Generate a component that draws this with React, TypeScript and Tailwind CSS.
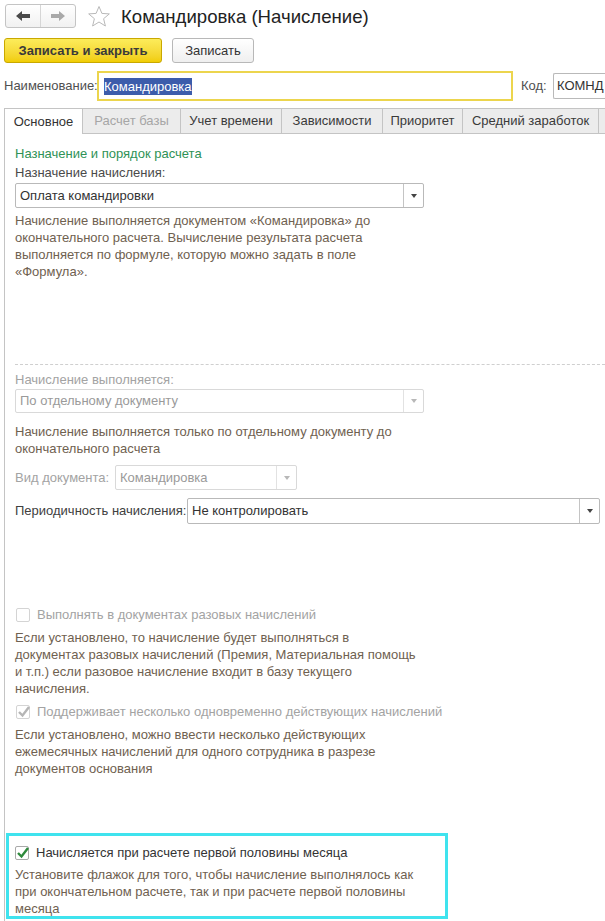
import type { ReactNode } from "react";

const tabs = [
  { label: "Основное", w: "w-[79px]", active: true },
  { label: "Расчет базы", w: "w-[98px]", disabled: true },
  { label: "Учет времени", w: "w-[101px]" },
  { label: "Зависимости", w: "w-[101px]" },
  { label: "Приоритет", w: "w-[80px]" },
  { label: "Средний заработок", w: "w-[136px]" },
];

function Arrow({ dir, color }: { dir: "left" | "right"; color: string }) {
  return (
    <svg width="16" height="12" viewBox="0 0 16 12" className={dir === "right" ? "rotate-180" : ""}>
      <path d="M1 6 L7 1 L7 4 L15 4 L15 8 L7 8 L7 11 Z" fill={color} />
    </svg>
  );
}

function Select({
  value,
  width,
  disabled,
  h = "h-[25px]",
}: {
  value: string;
  width: string;
  disabled?: boolean;
  h?: string;
}) {
  return (
    <div
      className={`flex ${width} ${h} items-stretch rounded-[2px] border bg-white ${
        disabled ? "border-[#d9d9d9] text-[#9a9a9a]" : "border-[#b9b9b9] text-[#333]"
      }`}
    >
      <div className="flex flex-1 items-center pl-[4px] text-[13px]">{value}</div>
      <div
        className={`flex w-[20px] items-center justify-center border-l ${
          disabled ? "border-[#e2e2e2]" : "border-[#c4c4c4]"
        }`}
      >
        <svg width="6" height="4" viewBox="0 0 6 4">
          <path d="M0 0 L6 0 L3 4 Z" fill={disabled ? "#b8b8b8" : "#444"} />
        </svg>
      </div>
    </div>
  );
}

function Checkbox({ checked, disabled }: { checked?: boolean; disabled?: boolean }) {
  return (
    <div
      className={`relative h-[14px] w-[14px] rounded-[2px] border bg-white ${
        disabled ? "border-[#d4d4d4]" : "border-[#a9a9a9]"
      }`}
    >
      {checked && (
        <svg width="14" height="13" viewBox="0 0 14 13" className="absolute left-[0px] top-[-1px]">
          <path
            d="M2 7 L5.5 10.5 L12 2"
            fill="none"
            stroke={disabled ? "#b5b5b5" : "#2f8a3c"}
            strokeWidth="2.4"
          />
        </svg>
      )}
    </div>
  );
}

function Desc({ children, className = "" }: { children: ReactNode; className?: string }) {
  return <div className={`text-[13px] leading-[17px] text-[#6f6150] ${className}`}>{children}</div>;
}

export default function App() {
  return (
    <div className="relative h-[921px] w-[605px] overflow-hidden bg-white font-['Liberation_Sans',Arial,sans-serif] text-[13px] text-[#404040]">
      {/* header */}
      <div className="mt-[4px] flex h-[24px] items-center pl-[5px]">
        <div className="flex h-[24px] w-[71px] rounded-[3px] border border-[#c4c4c4] bg-gradient-to-b from-white to-[#f1f1f1]">
          <div className="flex w-[35px] items-center justify-center border-r border-[#d6d6d6]">
            <Arrow dir="left" color="#4a4a4a" />
          </div>
          <div className="flex flex-1 items-center justify-center">
            <Arrow dir="right" color="#a9a9a9" />
          </div>
        </div>
        <svg width="24" height="23" viewBox="0 0 24 23" className="ml-[11px]">
          <path
            d="M12 1.5 L14.9 8.4 L22.3 8.9 L16.6 13.7 L18.4 21 L12 17 L5.6 21 L7.4 13.7 L1.7 8.9 L9.1 8.4 Z"
            fill="none"
            stroke="#b9b9b9"
            strokeWidth="1"
          />
        </svg>
        <div className="ml-[10px] mt-[2px] text-[18.6px] text-[#222]">Командировка (Начисление)</div>
      </div>

      {/* buttons */}
      <div className="mt-[10px] flex gap-[10px] pl-[4px]">
        <div className="flex h-[25px] w-[158px] items-center justify-center rounded-[3px] border border-[#c9a800] bg-gradient-to-b from-[#fcec5a] to-[#f1cd00] text-[13px] font-bold text-[#3a3a3a]">
          Записать и закрыть
        </div>
        <div className="flex h-[25px] w-[82px] items-center justify-center rounded-[3px] border border-[#b8b8b8] bg-gradient-to-b from-white to-[#efefef] text-[13px] text-[#333]">
          Записать
        </div>
      </div>

      {/* name row */}
      <div className="mt-[8px] flex h-[30px] items-center pl-[4px]">
        <span className="w-[93px] text-[#505050]">Наименование:</span>
        <div className="flex h-[30px] w-[416px] items-center border-2 border-[#ecd54d] pl-[5px]">
          <span className="bg-[#3c5cab] leading-[17px] text-white">Командировка</span>
        </div>
        <span className="ml-[8px] w-[32px] text-[#505050]">Код:</span>
        <div className="flex h-[26px] flex-1 items-center rounded-l-[2px] border border-r-0 border-[#b9b9b9] pl-[3px] text-[#333]">
          КОМНД
        </div>
      </div>

      {/* tabs */}
      <div className="mt-[7px] flex h-[26px] pl-[4px]">
        {tabs.map((t) =>
          t.active ? (
            <div
              key={t.label}
              className={`${t.w} flex items-center justify-center border border-b-0 border-[#c4c4c4] bg-white text-[#333]`}
            >
              {t.label}
            </div>
          ) : (
            <div
              key={t.label}
              className={`${t.w} flex items-center justify-center border border-l-0 border-[#c4c4c4] bg-[#ececec] ${
                t.disabled ? "text-[#a6a6a6]" : "text-[#3a3a3a]"
              }`}
            >
              {t.label}
            </div>
          )
        )}
        <div className="flex-1 border border-l-0 border-r-0 border-[#c4c4c4] bg-[#ececec]" />
      </div>

      {/* content */}
      <div className="ml-[4px] h-[800px] border-l border-[#c4c4c4] pl-[10px] pt-[11px]">
        <div className="leading-[17px] text-[#2f9256]">Назначение и порядок расчета</div>
        <div className="mt-[2px] leading-[17px] text-[#4a4a4a]">Назначение начисления:</div>
        <div className="mt-[2px]">
          <Select value="Оплата командировки" width="w-[409px]" />
        </div>
        <Desc className="mt-[4px]">
          Начисление выполняется документом «Командировка» до
          <br />
          окончательного расчета. Вычисление результата расчета
          <br />
          выполняется по формуле, которую можно задать в поле
          <br />
          «Формула».
        </Desc>

        <div className="mt-[84px] border-t border-dashed border-[#cfcfcf]" />

        <div className="mt-[6px] leading-[17px] text-[#a3a3a3]">Начисление выполняется:</div>
        <div className="mt-[1px]">
          <Select value="По отдельному документу" width="w-[409px]" h="h-[24px]" disabled />
        </div>
        <Desc className="mt-[10px] leading-[16px]">
          Начисление выполняется только по отдельному документу до
          <br />
          окончательного расчета
        </Desc>

        <div className="mt-[8px] flex items-center">
          <span className="w-[100px] text-[#a3a3a3]">Вид документа:</span>
          <Select value="Командировка" width="w-[182px]" disabled />
        </div>

        <div className="mt-[8px] flex items-center">
          <span className="w-[172px] text-[#404040]">Периодичность начисления:</span>
          <Select value="Не контролировать" width="w-[413px]" h="h-[26px]" />
        </div>

        <div className="mt-[83px] flex items-center gap-[7px] pl-[1px] leading-[16px]">
          <Checkbox disabled />
          <span className="text-[#a3a3a3]">Выполнять в документах разовых начислений</span>
        </div>
        <Desc className="mt-[6px]">
          Если установлено, то начисление будет выполняться в
          <br />
          документах разовых начислений (Премия, Материальная помощь
          <br />
          и т.п.) если разовое начисление входит в базу текущего
          <br />
          начисления.
        </Desc>
        <div className="mt-[7px] flex items-center gap-[7px] pl-[1px] leading-[16px]">
          <Checkbox disabled checked />
          <span className="text-[#a3a3a3]">Поддерживает несколько одновременно действующих начислений</span>
        </div>
        <Desc className="mt-[6px]">
          Если установлено, можно ввести несколько действующих
          <br />
          ежемесячных начислений для одного сотрудника в разрезе
          <br />
          документов основания
        </Desc>
      </div>

      {/* highlighted block */}
      <div className="absolute left-[6px] top-[833px] h-[86px] w-[442px] border-[3px] border-[#3fe3ee] bg-white pl-[6px] pt-[9px]">
        <div className="flex items-center gap-[7px] leading-[16px]">
          <Checkbox checked />
          <span className="text-[#333]">Начисляется при расчете первой половины месяца</span>
        </div>
        <Desc className="mt-[5px] leading-[16.5px]">
          Установите флажок для того, чтобы начисление выполнялось как
          <br />
          при окончательном расчете, так и при расчете первой половины
          <br />
          месяца
        </Desc>
      </div>
    </div>
  );
}
